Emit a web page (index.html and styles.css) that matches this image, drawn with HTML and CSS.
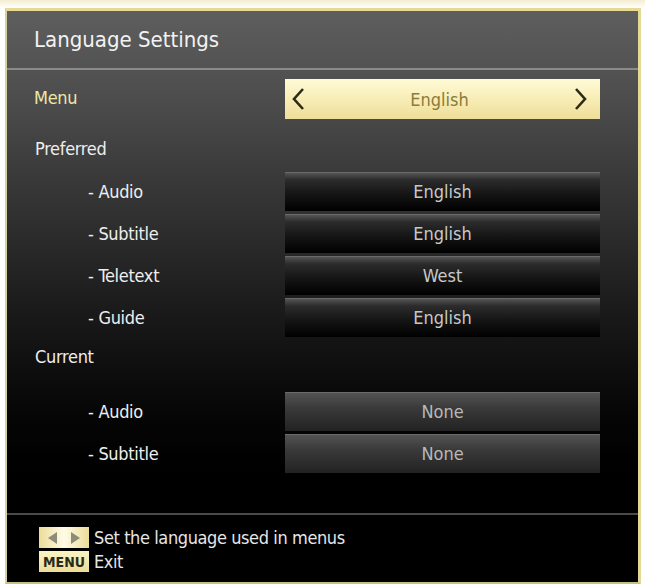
FILE: index.html
```html
<!DOCTYPE html>
<html lang="en">
<head>
    <meta charset="UTF-8">
    <title>Language Settings</title>
    <link rel="stylesheet" href="styles.css">
</head>
<body>
    <div class="frame">
        <div class="header">Language Settings</div>

        <div class="content">
            <div class="row">
                <div class="label menu-label">Menu</div>
                <div class="selector">
                    <svg class="chev" width="14" height="24" viewBox="0 0 14 24">
                        <polyline points="12,2 3,12 12,22" fill="none" stroke="#2e2a18" stroke-width="2.6"/>
                    </svg>
                    <span class="sel-value">English</span>
                    <svg class="chev" width="14" height="24" viewBox="0 0 14 24">
                        <polyline points="2,2 11,12 2,22" fill="none" stroke="#2e2a18" stroke-width="2.6"/>
                    </svg>
                </div>
            </div>

            <div class="section">Preferred</div>
            <div class="row">
                <div class="label sub">- Audio</div>
                <div class="bar">English</div>
            </div>
            <div class="row">
                <div class="label sub">- Subtitle</div>
                <div class="bar">English</div>
            </div>
            <div class="row">
                <div class="label sub">- Teletext</div>
                <div class="bar">West</div>
            </div>
            <div class="row">
                <div class="label sub">- Guide</div>
                <div class="bar">English</div>
            </div>

            <div class="section current">Current</div>
            <div class="row">
                <div class="label sub">- Audio</div>
                <div class="bar light">None</div>
            </div>
            <div class="row">
                <div class="label sub">- Subtitle</div>
                <div class="bar light">None</div>
            </div>
        </div>

        <div class="footer">
            <div class="hint">
                <span class="key arrows">
                    <svg width="42" height="16" viewBox="0 0 42 16">
                        <polygon points="5,8 14,2 14,14" fill="#8c8c78"/>
                        <polygon points="37,8 28,2 28,14" fill="#8c8c78"/>
                    </svg>
                </span>
                <span>Set the language used in menus</span>
            </div>
            <div class="hint">
                <span class="key">MENU</span>
                <span>Exit</span>
            </div>
        </div>
    </div>
</body>
</html>
```

FILE: styles.css
```css
html, body {
    margin: 0;
    padding: 0;
}
body {
    width: 645px;
    height: 587px;
    background: linear-gradient(#f4eed0, #ffffff 8px);
    font-family: "DejaVu Sans Condensed", "Liberation Sans Narrow", "Open Sans", sans-serif;
    overflow: hidden;
}
.frame {
    margin: 8px 4px 0 5px;
    height: 576px;
    box-sizing: border-box;
    border-top: 3px solid #e6da94;
    border-left: 2px solid #d9d0a0;
    border-right: 3px solid #e2d898;
    border-bottom: 2px solid #c8c080;
    background: linear-gradient(#5e5e5e 0px, #4c4c4c 90px, #363636 180px, #1a1a1a 300px, #060606 400px, #000 460px);
    display: flex;
    flex-direction: column;
}
.header {
    height: 59px;
    line-height: 58px;
    padding-left: 27px;
    font-size: 22px;
    color: #f2f2f2;
    border-bottom: 2px solid #8a8a86;
    box-sizing: border-box;
}
.content {
    padding: 8px 38px 0 26px;
    flex: 1;
}
.row {
    display: flex;
    align-items: center;
    height: 42px;
}
.label {
    flex: 1;
    font-size: 18px;
    letter-spacing: -0.3px;
    color: #eeeeee;
}
.menu-label {
    color: #efe6a8;
    padding-left: 1px;
    margin-top: -4px;
}
.sub {
    padding-left: 55px;
}
.selector {
    width: 315px;
    height: 40px;
    box-sizing: border-box;
    padding: 0 12px 0 6px;
    display: flex;
    align-items: center;
    background: linear-gradient(#fffbd6, #f6eab0 60%, #eedd9a);
}
.sel-value {
    flex: 1;
    text-align: center;
    font-size: 18px;
    color: #8a7c3c;
}
.section {
    height: 50px;
    line-height: 58px;
    font-size: 18px;
    letter-spacing: -0.3px;
    color: #eeeeee;
    padding-left: 2px;
}
.current {
    height: 52px;
    line-height: 38px;
}
.bar {
    width: 315px;
    height: 39px;
    line-height: 39px;
    text-align: center;
    font-size: 18px;
    color: #c8c8c8;
    background: linear-gradient(#5a5a5a, #2c2c2c 20%, #161616 55%, #000 100%);
    box-shadow: inset 0 1px 0 #6a6a6a;
}
.bar.light {
    background: linear-gradient(#555, #3a3a3a 40%, #222 100%);
    color: #b8b8b8;
}
.footer {
    border-top: 2px solid #4a4a4a;
    padding: 12px 0 10px 32px;
    display: flex;
    flex-direction: column;
    gap: 3px;
}
.hint {
    display: flex;
    align-items: center;
    gap: 5px;
    font-size: 18px;
    letter-spacing: -0.4px;
    color: #e6e6e6;
}
.key {
    width: 50px;
    height: 21px;
    box-sizing: border-box;
    display: flex;
    align-items: center;
    justify-content: center;
    background: linear-gradient(#fbf4c4, #ecdc98);
    color: #2a2a1a;
    font-size: 14px;
    font-weight: bold;
    letter-spacing: 0;
}
.arrows {
    background: linear-gradient(90deg, #ecdc98, #fffbe8 50%, #ecdc98);
}
```
